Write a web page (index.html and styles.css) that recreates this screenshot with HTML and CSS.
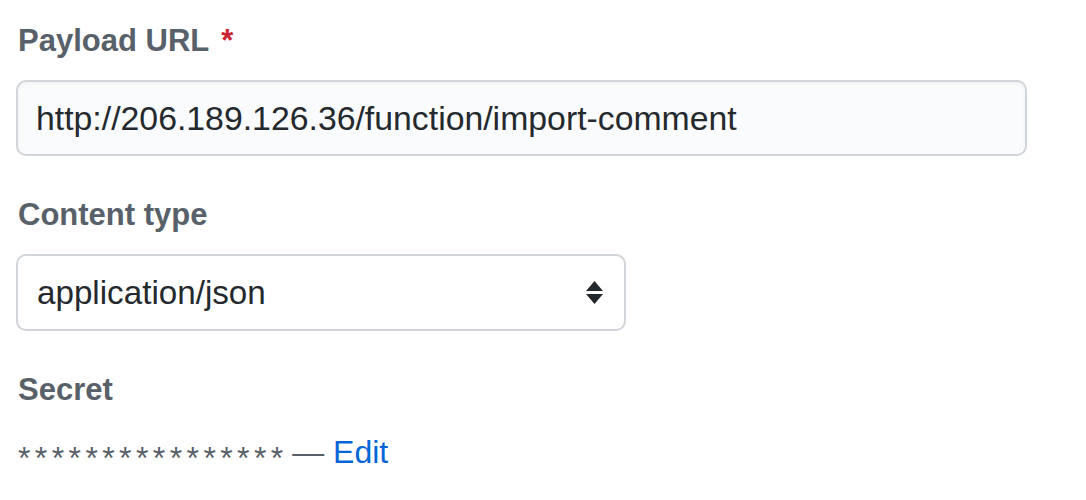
FILE: index.html
```html
<!DOCTYPE html>
<html>
<head>
<meta charset="utf-8">
<link rel="stylesheet" href="styles.css">
</head>
<body>
<form class="form">
  <div class="field">
    <label class="label" for="url">Payload URL <span class="req">*</span></label>
    <input class="input" id="url" type="text" value="http://206.189.126.36/function/import-comment">
  </div>
  <div class="field">
    <label class="label">Content type</label>
    <div class="select">
      <span class="select-text">application/json</span>
      <svg class="select-arrows" width="17" height="23" viewBox="0 0 17 23"><path d="M8.5 0 L17 10 H0 Z M0 13 H17 L8.5 23 Z" fill="#24292e"/></svg>
    </div>
  </div>
  <div class="field">
    <label class="label">Secret</label>
    <p class="secret"><span class="stars">****************</span> <span class="dash">—</span> <a class="edit" href="#">Edit</a></p>
  </div>
</form>
</body>
</html>
```
FILE: styles.css
```css
html, body {
  margin: 0;
  padding: 0;
  background: #fff;
}
body {
  padding: 18px 16px 0 16px;
  font-family: "Liberation Sans", Arial, sans-serif;
}
.form {
  display: flex;
  flex-direction: column;
}
.field {
  display: flex;
  flex-direction: column;
  margin-bottom: 36px;
}
.label {
  display: block;
  font-size: 31px;
  line-height: 46px;
  font-weight: bold;
  color: #586069;
  margin: 0 0 16px 2px;
}
.req {
  color: #cb2431;
  margin-left: 4px;
}
.input {
  box-sizing: border-box;
  width: 1011px;
  height: 76px;
  margin: 0;
  padding: 0 18px;
  border: 2px solid #d1d5da;
  border-radius: 10px;
  background: #fafbfc;
  font-family: "Liberation Sans", Arial, sans-serif;
  font-size: 33.8px;
  color: #24292e;
  box-shadow: inset 0 2px 4px rgba(27,31,35,0.04);
  outline: none;
}
.select {
  box-sizing: border-box;
  width: 610px;
  height: 77px;
  display: flex;
  align-items: center;
  justify-content: space-between;
  padding: 0 21px 0 19px;
  border: 2px solid #d1d5da;
  border-radius: 10px;
  background: #fff;
}
.select-text {
  font-size: 33.2px;
  color: #24292e;
}
.select-arrows {
  display: block;
}
.secret {
  margin: 0 0 0 2px;
  font-size: 32px;
  line-height: 46px;
  color: #586069;
}
.stars {
  letter-spacing: 4.4px;
  margin-right: -4.4px;
  font-size: 32px;
  vertical-align: -0.2em;
}
.dash {
  color: #586069;
}
.edit {
  color: #0366d6;
  text-decoration: none;
}
```
